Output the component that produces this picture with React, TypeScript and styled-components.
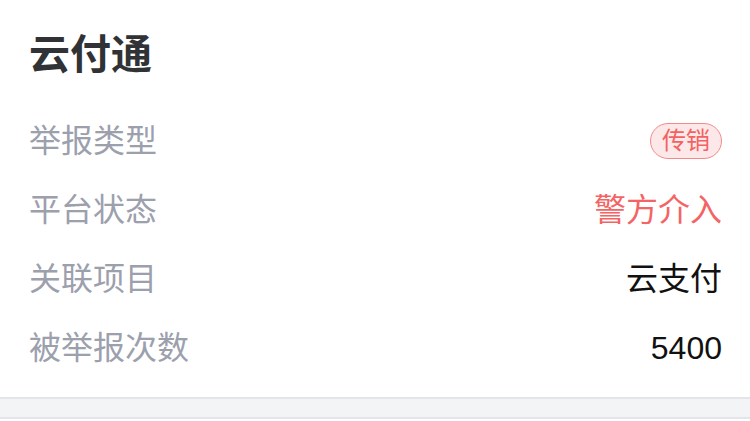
import React from 'react'
import styled, {createGlobalStyle} from 'styled-components'

const GlobalStyle = createGlobalStyle`
  html, body {
    margin: 0;
    padding: 0;
    background: #ffffff;
  }
  body {
    font-family: "Liberation Sans", "Noto Sans CJK SC", sans-serif;
  }
`

const rows = [
  {label: '举报类型', value: '传销', kind: 'tag'},
  {label: '平台状态', value: '警方介入', kind: 'alert'},
  {label: '关联项目', value: '云支付', kind: 'plain'},
  {label: '被举报次数', value: '5400', kind: 'plain'},
]

const App = () => {
  return (
    <>
      <GlobalStyle />
      <StyledPage>
        <StyledCard>
          <StyledTitle>云付通</StyledTitle>
          <StyledList>
            {rows.map((row) => (
              <StyledRow key={row.label}>
                <StyledLabel>{row.label}</StyledLabel>
                {row.kind === 'tag' ? (
                  <StyledTag>{row.value}</StyledTag>
                ) : (
                  <StyledValue $alert={row.kind === 'alert'}>{row.value}</StyledValue>
                )}
              </StyledRow>
            ))}
          </StyledList>
        </StyledCard>
        <StyledGap />
      </StyledPage>
    </>
  )
}

const StyledPage = styled.div`
  width: 750px;
  height: 421px;
  overflow: hidden;
  background: #ffffff;
`

const StyledCard = styled.div`
  height: 399px;
  box-sizing: border-box;
  padding: 31px 28px 0 29px;
  border-bottom: 2px solid #e4e5ea;
`

const StyledTitle = styled.div`
  font-size: 41px;
  line-height: 49px;
  font-weight: 700;
  color: #303236;
  margin-bottom: 26px;
`

const StyledList = styled.div`
  display: flex;
  flex-direction: column;
`

const StyledRow = styled.div`
  height: 69px;
  display: flex;
  align-items: center;
  justify-content: space-between;
`

const StyledLabel = styled.div`
  font-size: 32px;
  line-height: 40px;
  color: #9ca0ad;
`

const StyledValue = styled.div<{$alert?: boolean}>`
  font-size: 32px;
  line-height: 40px;
  color: ${(p) => (p.$alert ? '#f46464' : '#111111')};
`

const StyledTag = styled.div`
  height: 36px;
  box-sizing: border-box;
  padding: 0 11px;
  display: flex;
  align-items: center;
  border: 1.5px solid #f28a8a;
  border-radius: 18px;
  background: #fde8e9;
  color: #f26262;
  font-size: 24px;
  line-height: 1;
`

const StyledGap = styled.div`
  height: 18px;
  background: #f3f4f6;
  border-bottom: 2px solid #e4e5ea;
`

export default App
